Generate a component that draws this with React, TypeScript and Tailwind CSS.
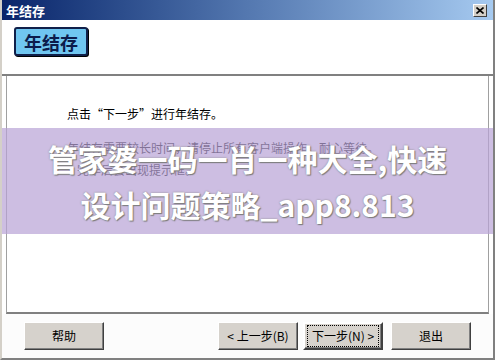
const btn =
  "h-[28px] w-[80px] bg-[#d6d2cc] text-[12px] text-black flex items-center justify-center border border-t-white border-l-white border-r-[#404040] border-b-[#404040] shadow-[inset_-1px_-1px_0_#808080]";

const App = () => {
  return (
    <div
      className="relative w-[495px] h-[360px] bg-white overflow-hidden flex flex-col border-l-2 border-r-2 border-b-2 border-l-[#d4d0c8] border-r-[#808080] border-b-[#808080]"
      style={{ fontFamily: '"Noto Sans CJK SC", "Liberation Sans", sans-serif' }}
    >
      {/* title bar */}
      <div className="h-[20px] flex items-center justify-between pl-[4px] pr-[6px] bg-gradient-to-r from-[#0a246a] via-[#5478b0] to-[#a6caf0]">
        <span className="text-white text-[13px] font-bold leading-none">年结存</span>
        <div className="w-[14px] h-[13px] bg-[#d4d0c8] flex items-center justify-center border border-t-white border-l-white border-r-[#404040] border-b-[#404040]">
          <svg width="8" height="7" viewBox="0 0 8 7">
            <path d="M0.5 0.5 L7.5 6.5 M7.5 0.5 L0.5 6.5" stroke="#000" strokeWidth="1.6" />
          </svg>
        </div>
      </div>

      {/* header panel */}
      <div className="h-[56px] px-[12px] pt-[7px] border-b-2 border-b-[#808080] shadow-[0_1px_0_#fff]">
        <div className="w-[74px] h-[29px] rounded-[3px] bg-[#70c6f0] border-2 border-[#10204a] shadow-[1px_1px_0_#000] flex items-center justify-center">
          <span className="text-[18px] font-bold text-[#0c1c4c] leading-none">年结存</span>
        </div>
      </div>

      {/* body */}
      <div className="flex-1 mx-[4px] border-l border-r border-[#a0a0a0] border-b-2 border-b-[#808080] pl-[60px] pt-[30px] text-[12px] text-black">
        <p className="leading-[16px]">点击“下一步”进行年结存。</p>
        <p className="mt-[18px] leading-[16px]">年结存需要较长时间，请停止所有客户端操作，耐心等待。</p>
        <p className="mt-[6px] pl-[10px] leading-[16px]">完毕后会出现提示框。</p>
      </div>

      {/* buttons */}
      <div className="h-[44px] flex items-center px-[22px] bg-[#fcfcfc]">
        <button className={btn}>帮助</button>
        <div className="flex-1" />
        <button className={btn}>&lt; 上一步(B)</button>
        <button className={`${btn} ml-[5px] border-2 border-black`}>
          <span className="px-[4px] py-[1px] border border-dotted border-black">下一步(N) &gt;</span>
        </button>
        <button className={`${btn} ml-[8px]`}>退出</button>
      </div>

      {/* watermark overlay */}
      <div className="absolute left-0 right-0 top-[128px] h-[106px] bg-[#b8a2d6]/70 flex flex-col items-center justify-center">
        <span
          className="text-white font-bold text-[30px] leading-[40px]"
          style={{ textShadow: "0 0 2px #888, 1px 1px 1px #777" }}
        >
          管家婆一码一肖一种大全,快速
        </span>
        <span
          className="text-white font-bold text-[30px] leading-[40px] mt-[6px]"
          style={{ textShadow: "0 0 2px #888, 1px 1px 1px #777" }}
        >
          设计问题策略_app8.813
        </span>
      </div>
    </div>
  );
};

export default App;
